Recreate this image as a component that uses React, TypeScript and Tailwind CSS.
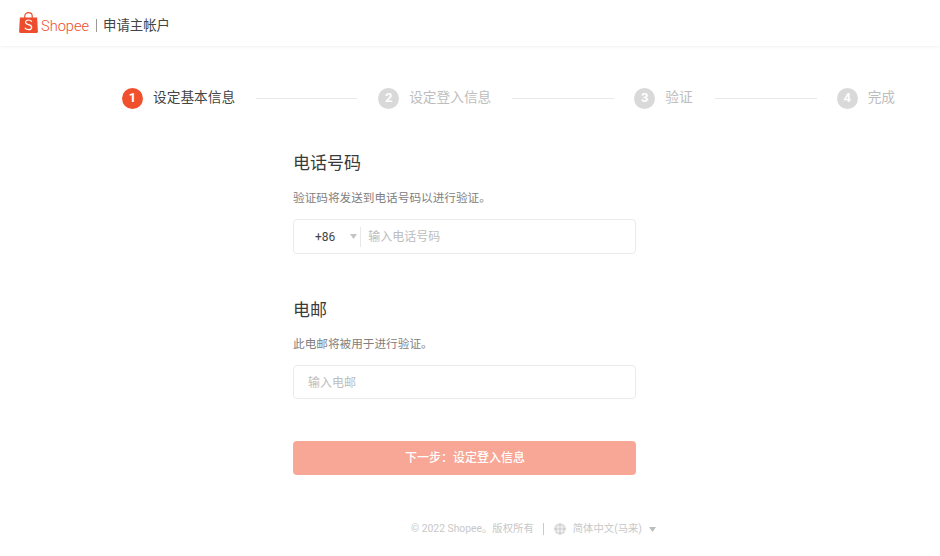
import React from "react";

const font = { fontFamily: '"Roboto", "Noto Sans CJK SC", sans-serif' };

function Bag() {
  return (
    <svg width="19" height="21" viewBox="0 0 19 21" className="block">
      <path d="M.9 5.4h17.2l.8 14a1.5 1.5 0 0 1-1.5 1.5H1.6A1.5 1.5 0 0 1 .1 19.4z" fill="#ee4d2d" />
      <path d="M5.8 6V3.9C5.8 2 7.4.7 9.5.7s3.7 1.3 3.7 3.2V6" fill="none" stroke="#ee4d2d" strokeWidth="1.2" />
      <path d="M12.6 9.4c-.7-.8-1.8-1.4-3.1-1.4-1.7 0-2.9.9-2.9 2.2 0 3 6.1 1.8 6.1 5 0 1.4-1.4 2.5-3.2 2.5-1.4 0-2.6-.6-3.4-1.6" fill="none" stroke="#fff" strokeWidth="1.2" strokeLinecap="round" />
    </svg>
  );
}

function Step({ n, label, active }: { n: number; label: string; active?: boolean }) {
  return (
    <div className="flex items-center gap-[10px] shrink-0">
      <div
        className={
          active
            ? "w-[21px] h-[21px] rounded-full flex items-center justify-center bg-[#f1502e] text-white text-[13px] font-bold"
            : "w-[21px] h-[21px] rounded-full flex items-center justify-center bg-[#d9d9d9] text-white text-[13px] font-bold"
        }
      >
        {n}
      </div>
      <span className={active ? "text-[13.7px] text-[#444444] -mt-[2px]" : "text-[13.7px] text-[#bdbdbd] -mt-[2px]"}>{label}</span>
    </div>
  );
}

function Line({ w }: { w: string }) {
  return <div className={`${w} h-px bg-[#e8e8e8] shrink-0`} />;
}

export default function App() {
  return (
    <div style={font} className="w-[940px] h-[556px] bg-white overflow-hidden flex flex-col">
      <header className="h-[46px] shrink-0 flex items-start pl-[19px] pt-[12px] shadow-[0_1px_3px_rgba(0,0,0,0.06)]">
        <Bag />
        <span className="ml-[3px] mt-[6px] text-[14.6px] font-light leading-[16px] text-[#ee4d2d]">Shopee</span>
        <span className="ml-[7px] mt-[7px] w-px h-[13px] bg-[#9a9a9a]" />
        <span className="ml-[6px] mt-[4px] text-[13.4px] leading-[20px] text-[#444444]">申请主帐户</span>
      </header>

      <div className="mt-[41px] pl-[122px] h-[22px] flex items-center">
        <Step n={1} label="设定基本信息" active />
        <div className="w-[21px]" />
        <Line w="w-[101px]" />
        <div className="w-[21px]" />
        <Step n={2} label="设定登入信息" />
        <div className="w-[21px]" />
        <Line w="w-[102px]" />
        <div className="w-[20px]" />
        <Step n={3} label="验证" />
        <div className="w-[22px]" />
        <Line w="w-[102px]" />
        <div className="w-[20px]" />
        <Step n={4} label="完成" />
      </div>

      <main className="ml-[293px] w-[343px] mt-[42px] flex flex-col">
        <h2 className="text-[17px] leading-[24px] text-[#3a3a3a]">电话号码</h2>
        <p className="mt-[14px] text-[11.65px] leading-[18px] text-[#808080]">验证码将发送到电话号码以进行验证。</p>
        <div className="mt-[12px] h-[35px] border border-[#ebebeb] rounded-[4px] flex items-center">
          <span className="ml-[21px] text-[12px] text-[#444444]">+86</span>
          <svg width="7" height="5" viewBox="0 0 7 5" className="ml-[15px]">
            <path d="M0 0h7L3.5 5z" fill="#c4c4c4" />
          </svg>
          <span className="ml-[3px] w-px h-[20px] bg-[#e8e8e8]" />
          <span className="ml-[7px] text-[12px] text-[#bdbdbd]">输入电话号码</span>
        </div>

        <h2 className="mt-[44px] text-[17px] leading-[24px] text-[#3a3a3a]">电邮</h2>
        <p className="mt-[13px] text-[11.65px] leading-[18px] text-[#808080]">此电邮将被用于进行验证。</p>
        <div className="mt-[12px] h-[34px] border border-[#ebebeb] rounded-[4px] flex items-center pl-[14px] pt-px">
          <span className="text-[12px] text-[#bdbdbd]">输入电邮</span>
        </div>

        <button className="mt-[42px] h-[34px] pl-px rounded-[4px] bg-[#f8a796] text-white text-[12px] font-medium flex items-center justify-center">
          下一步：设定登入信息
        </button>
      </main>

      <footer className="mt-[45px] ml-[411px] h-[18px] flex items-center text-[10.35px] text-[#c8c8c8]">
        <span>© 2022 Shopee。版权所有</span>
        <span className="ml-[9px] w-px h-[12px] bg-[#c9c9c9]" />
        <svg width="12" height="12" viewBox="0 0 12 12" className="ml-[10px]">
          <circle cx="6" cy="6" r="5.8" fill="#cfcfcf" />
          <path d="M.5 4h11M.5 8h11M4 .6v10.8M8 .6v10.8" fill="none" stroke="#ffffff" strokeWidth="0.8" />
        </svg>
        <span className="ml-[7px]">简体中文(马来)</span>
        <svg width="7" height="5" viewBox="0 0 7 5" className="ml-[7px]">
          <path d="M0 0h7L3.5 5z" fill="#bdbdbd" />
        </svg>
      </footer>
    </div>
  );
}
